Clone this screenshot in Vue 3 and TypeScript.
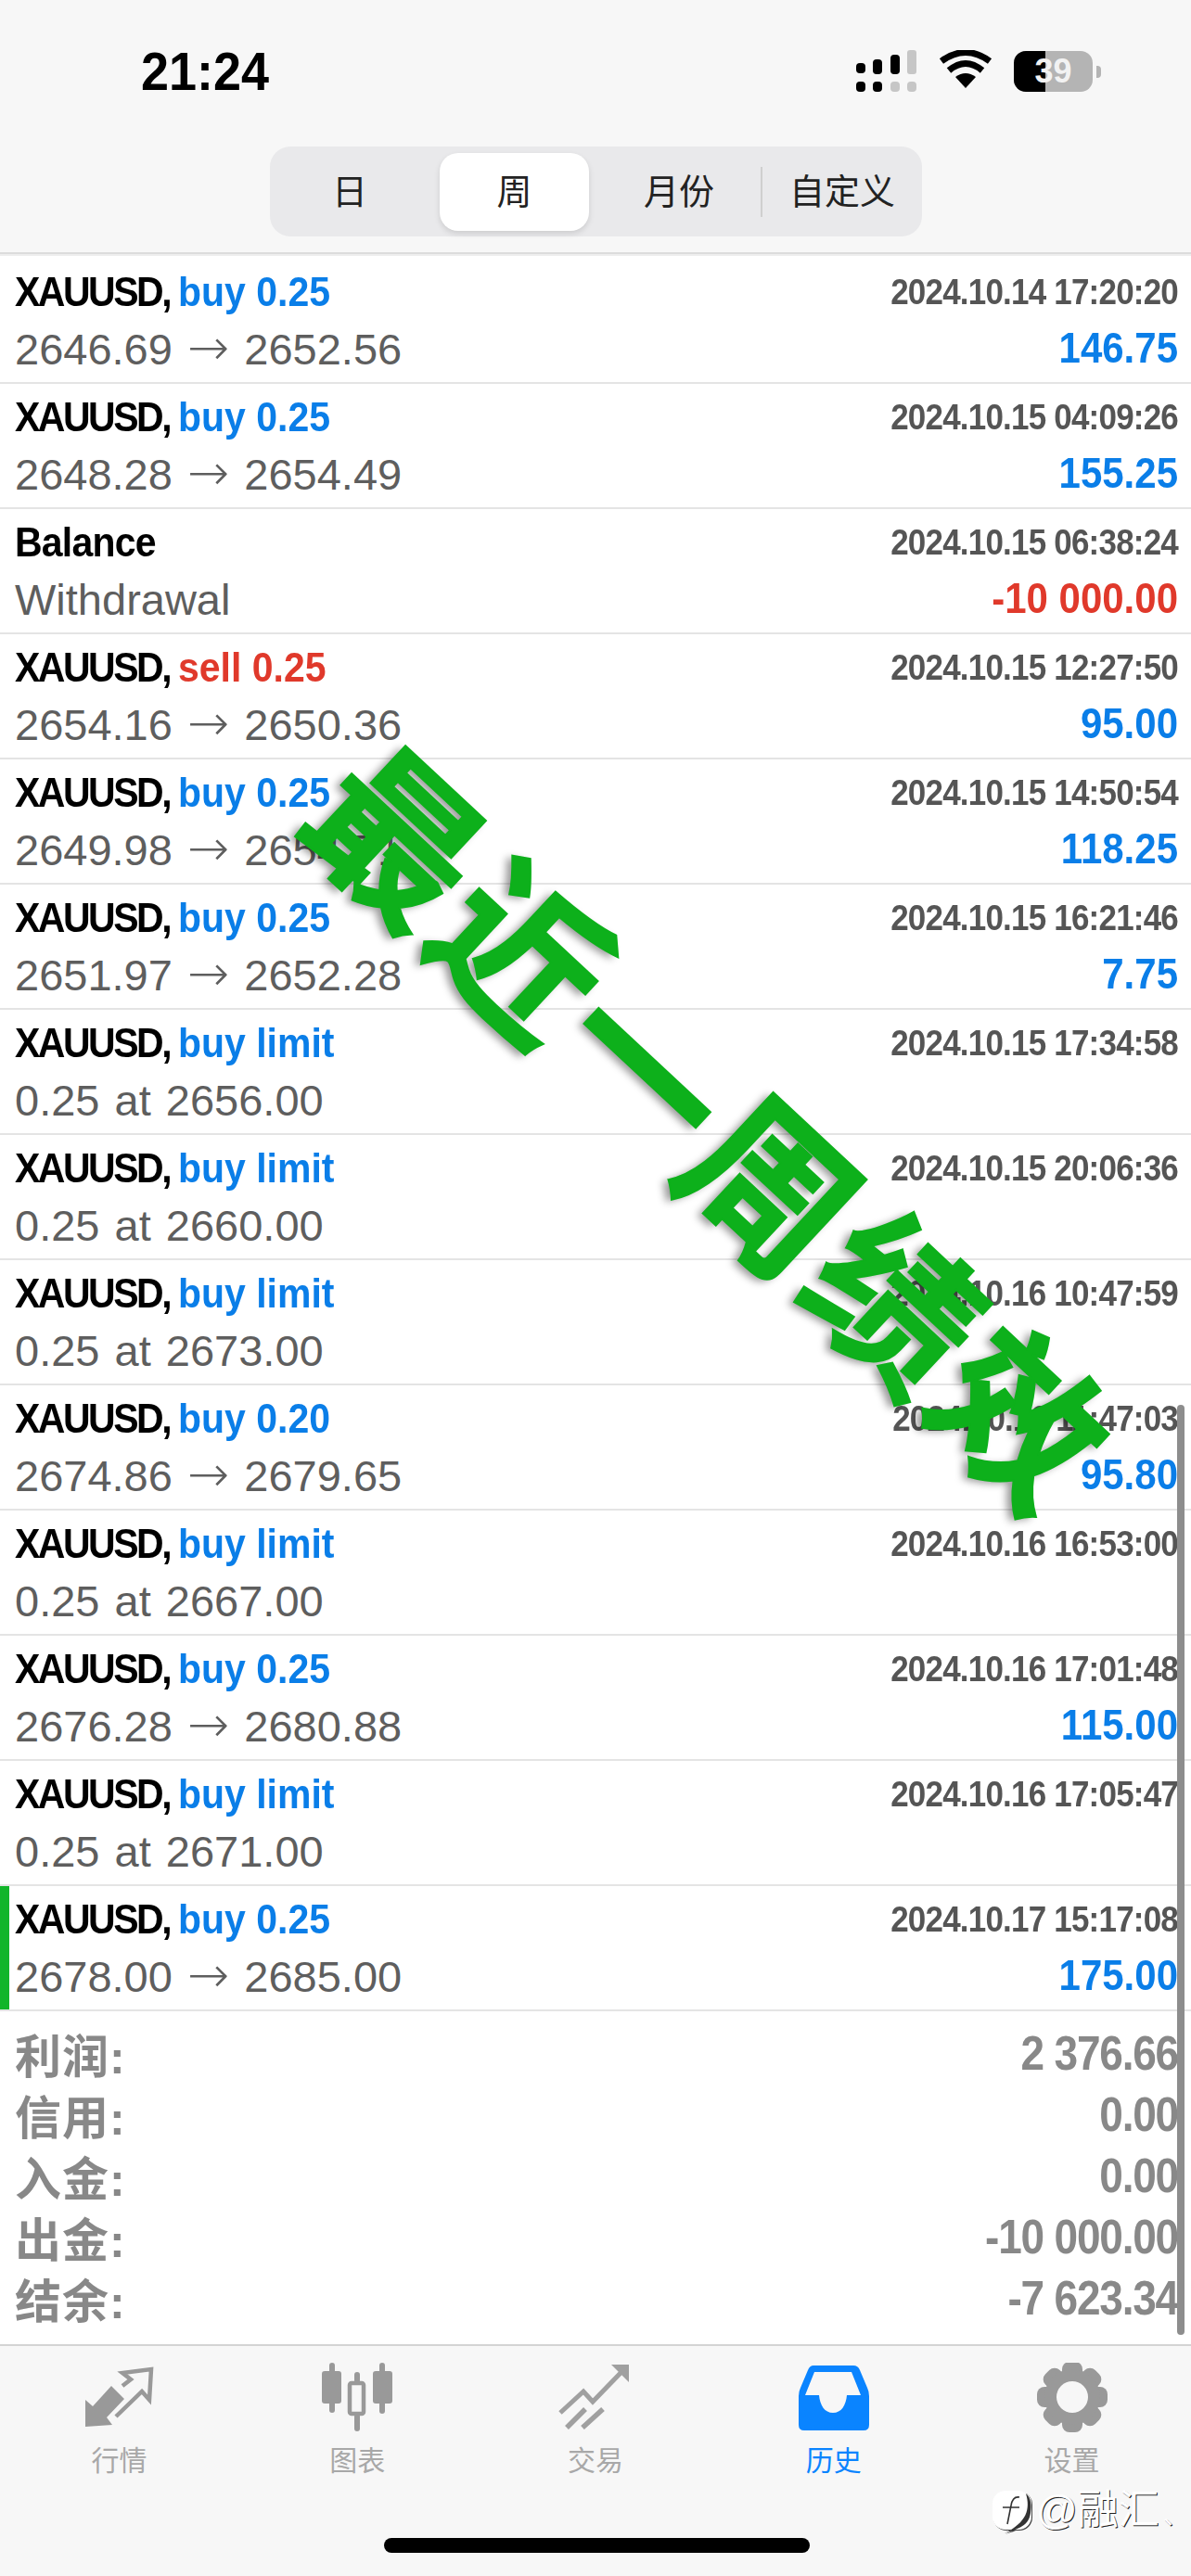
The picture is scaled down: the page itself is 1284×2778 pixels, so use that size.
<script setup lang="ts">
interface Row {
  title: string
  side: string
  sub: string
  time: string
  value?: string
  marked?: boolean
}

const rows: Row[] = [
  { title: 'XAUUSD,', side: 'buy 0.25', sub: '2646.69 → 2652.56', time: '2024.10.14 17:20:20', value: '146.75' },
  { title: 'XAUUSD,', side: 'buy 0.25', sub: '2648.28 → 2654.49', time: '2024.10.15 04:09:26', value: '155.25' },
  { title: 'Balance', side: '', sub: 'Withdrawal', time: '2024.10.15 06:38:24', value: '-10 000.00' },
  { title: 'XAUUSD,', side: 'sell 0.25', sub: '2654.16 → 2650.36', time: '2024.10.15 12:27:50', value: '95.00' },
  { title: 'XAUUSD,', side: 'buy 0.25', sub: '2649.98 → 2654.71', time: '2024.10.15 14:50:54', value: '118.25' },
  { title: 'XAUUSD,', side: 'buy 0.25', sub: '2651.97 → 2652.28', time: '2024.10.15 16:21:46', value: '7.75' },
  { title: 'XAUUSD,', side: 'buy limit', sub: '0.25 at 2656.00', time: '2024.10.15 17:34:58' },
  { title: 'XAUUSD,', side: 'buy limit', sub: '0.25 at 2660.00', time: '2024.10.15 20:06:36' },
  { title: 'XAUUSD,', side: 'buy limit', sub: '0.25 at 2673.00', time: '2024.10.16 10:47:59' },
  { title: 'XAUUSD,', side: 'buy 0.20', sub: '2674.86 → 2679.65', time: '2024.10.16 11:47:03', value: '95.80' },
  { title: 'XAUUSD,', side: 'buy limit', sub: '0.25 at 2667.00', time: '2024.10.16 16:53:00' },
  { title: 'XAUUSD,', side: 'buy 0.25', sub: '2676.28 → 2680.88', time: '2024.10.16 17:01:48', value: '115.00' },
  { title: 'XAUUSD,', side: 'buy limit', sub: '0.25 at 2671.00', time: '2024.10.16 17:05:47' },
  { title: 'XAUUSD,', side: 'buy 0.25', sub: '2678.00 → 2685.00', time: '2024.10.17 15:17:08', value: '175.00', marked: true },
]

const totals = [
  ['利润:', '2 376.66'],
  ['信用:', '0.00'],
  ['入金:', '0.00'],
  ['出金:', '-10 000.00'],
  ['结余:', '-7 623.34'],
]

const tabs = ['行情', '图表', '交易', '历史', '设置']
const gearTeeth = [0, 45, 90, 135, 180, 225, 270, 315]

function sideClass(row: Row) {
  return row.side.startsWith('sell') ? 'red' : 'blue'
}
function valueClass(row: Row) {
  return row.title === 'Balance' ? 'red' : 'blue'
}
function subParts(row: Row) {
  return row.sub.split(' → ')
}
</script>

<template>
  <div class="screen">
    <header class="top">
      <div class="status">
        <span class="clock">21:24</span>
        <div class="status-icons">
          <svg class="signal" width="66" height="46" viewBox="0 0 66 46">
            <g fill="#000">
              <rect x="0" y="14" width="10" height="11" rx="4" /><rect x="0" y="34" width="10" height="11" rx="4" />
              <rect x="18" y="10" width="10" height="16" rx="4" /><rect x="18" y="34" width="10" height="11" rx="4" />
              <rect x="37" y="5" width="10" height="21" rx="4" />
            </g>
            <g fill="#c6c6c6">
              <rect x="37" y="34" width="10" height="11" rx="4" />
              <rect x="55" y="0" width="10" height="26" rx="3" /><rect x="55" y="34" width="10" height="11" rx="4" />
            </g>
          </svg>
          <svg class="wifi" width="58" height="42" viewBox="0 0 58 42">
            <path d="M29 41 L18 29 Q29 21 40 29 Z" fill="#000" />
            <path d="M11 22 Q29 7 47 22" fill="none" stroke="#000" stroke-width="7" />
            <path d="M3 12 Q29 -7 55 12" fill="none" stroke="#000" stroke-width="7" />
          </svg>
          <div class="battery"><span class="level"></span><span class="num">39</span></div>
          <span class="nub"></span>
        </div>
      </div>
      <div class="segments">
        <span class="seg seg-day">日</span>
        <span class="seg seg-week">周</span>
        <span class="seg seg-month">月份</span>
        <span class="seg-line"></span>
        <span class="seg seg-custom">自定义</span>
      </div>
    </header>

    <main class="list">
      <div v-for="row in rows" :key="row.time" class="row" :class="{ marked: row.marked }">
        <div class="line">
          <span class="title" :class="{ plain: !row.side }">{{ row.title }} <span class="side" :class="sideClass(row)">{{ row.side }}</span></span>
          <span class="time">{{ row.time }}</span>
        </div>
        <div class="line">
          <span class="sub">
            <template v-if="subParts(row).length === 2">{{ subParts(row)[0] }} <span class="arrow">→</span> {{ subParts(row)[1] }}</template>
            <template v-else>{{ row.sub }}</template>
          </span>
          <span v-if="row.value" class="value" :class="valueClass(row)">{{ row.value }}</span>
        </div>
      </div>
    </main>

    <section class="totals">
      <div v-for="item in totals" :key="item[0]" class="total">
        <span class="total-label">{{ item[0] }}</span><span class="total-num">{{ item[1] }}</span>
      </div>
    </section>

    <nav class="tabbar">
      <div v-for="(tab, i) in tabs" :key="tab" class="tab" :class="{ active: i === 3 }">
        <svg width="80" height="78" viewBox="0 0 80 78">
          <g v-if="i === 0">
            <path d="M4 40 L12 47 L32 25 L46 39 L27 59 L33 67 L4 69 Z" fill="#999" />
            <path d="M44 25 L53 18 L44 11 L75 7 L73 40 L65 31 L37 58" fill="none" stroke="#999" stroke-width="4.5" />
          </g>
          <g v-else-if="i === 1" fill="#999">
            <rect x="2" y="9" width="21" height="35" rx="3" /><rect x="10" y="0" width="6" height="54" rx="3" />
            <rect x="32" y="22" width="15" height="33" rx="2" fill="none" stroke="#999" stroke-width="4.5" /><rect x="37" y="10" width="6" height="12" rx="3" /><rect x="37" y="55" width="6" height="19" rx="3" />
            <rect x="57" y="9" width="21" height="35" rx="3" /><rect x="64" y="0" width="6" height="55" rx="3" />
          </g>
          <g v-else-if="i === 2">
            <path d="M2 54 L27 31 L37 42 L69 9" fill="none" stroke="#a0a0a0" stroke-width="5" />
            <path d="M57 2 H76 V21 Z" fill="#a0a0a0" />
            <path d="M9 70 L29 50 M26 70 L48 50" fill="none" stroke="#a0a0a0" stroke-width="5.5" />
          </g>
          <g v-else-if="i === 3">
            <path d="M18 3 H61 Q66 3 68 8 L76 27 Q78 31 78 36 V67 Q78 73 72 73 H8 Q2 73 2 67 V36 Q2 31 4 27 L12 8 Q14 3 18 3 Z" fill="#0a84ff" />
            <path d="M19 10 H59 L69 35 H54 C53 46 48 54 39 54 C30 54 25 46 24 35 H9 Z" fill="#f7f7f7" />
          </g>
          <g v-else fill="#999">
            <rect v-for="deg in gearTeeth" :key="deg" x="29" y="-1" width="22" height="18" rx="8" :transform="`rotate(${deg} 40 37)`" />
            <path fill-rule="evenodd" d="M40 7 A30 30 0 1 1 40 67 A30 30 0 1 1 40 7 Z M40 20 A17 17 0 1 0 40 54 A17 17 0 1 0 40 20 Z" />
          </g>
        </svg>
        <span class="tab-label">{{ tab }}</span>
      </div>
    </nav>

    <div class="home"></div>
    <div class="scrollbar"></div>
    <div class="stamp">最近一周绩效</div>
    <div class="mark">
      <svg width="46" height="48" viewBox="0 0 46 48">
        <rect x="1" y="0" width="42" height="42" rx="14" fill="#fff" />
        <path d="M14 46 C24 42 40 40 42 24 C43 16 43 8 37 3 C42 20 38 34 14 46 Z" fill="#333" />
        <path d="M12 18 H30 M30 7 C24 6 22 10 21 16 L17 36" fill="none" stroke="#333" stroke-width="1.6" />
      </svg>
      <span>@融汇<span class="comma">、</span></span>
    </div>
  </div>
</template>

<style scoped>
.screen {
  position: relative;
  width: 1284px;
  height: 2778px;
  overflow: hidden;
  background: #fff;
  display: flex;
  flex-direction: column;
  font-family: "Liberation Sans", "Noto Sans CJK SC", sans-serif;
}

.top {
  height: 272px;
  background: #f7f7f7;
  border-bottom: 2px solid #dcdcdc;
  flex: none;
}

.status {
  display: flex;
  justify-content: space-between;
  align-items: center;
  height: 50px;
  padding: 52px 97px 0 152px;
}

.clock {
  font-size: 54px;
  font-weight: 700;
  color: #000;
  transform: scaleY(1.06);
}

.status-icons {
  display: flex;
  align-items: center;
  gap: 23px;
}

.wifi { margin-top: -4px; }

.battery {
  position: relative;
  width: 85px;
  height: 44px;
  border-radius: 13px;
  background: #b4b4b4;
  overflow: hidden;
}

.level {
  position: absolute;
  inset: 0 auto 0 0;
  width: 34px;
  background: #000;
}

.num {
  position: absolute;
  inset: 0;
  text-align: center;
  font-size: 36px;
  line-height: 44px;
  font-weight: 700;
  color: #f2f2f2;
}

.nub {
  width: 5px;
  height: 13px;
  margin-left: -19px;
  border-radius: 0 4px 4px 0;
  background: #b4b4b4;
}

.segments {
  margin: 56px 0 0 291px;
  width: 703px;
  height: 97px;
  border-radius: 22px;
  background: #e9e9eb;
  display: flex;
  align-items: center;
  font-size: 38px;
  color: #222;
}

.seg {
  text-align: center;
  line-height: 84px;
}

.seg-day { width: 172px; margin-right: 11px; }
.seg-week {
  width: 161px;
  border-radius: 20px;
  background: #fff;
  box-shadow: 0 3px 6px rgba(0, 0, 0, 0.12);
}
.seg-month { width: 170px; margin-left: 12px; margin-right: 3px; }
.seg-line {
  width: 2px;
  height: 54px;
  background: #cfcfcf;
}
.seg-custom { width: 172px; }

.list {
  padding-top: 3px;
  border-top: 2px solid #eee;
  flex: none;
}

.row {
  box-sizing: border-box;
  height: 135px;
  padding: 6px 14px 0 16px;
  border-bottom: 2px solid #e4e4e4;
  position: relative;
}

.row.marked::before {
  content: "";
  position: absolute;
  left: 0;
  top: 0;
  bottom: 0;
  width: 10px;
  background: #12b52a;
}

.line {
  display: flex;
  justify-content: space-between;
  align-items: center;
  height: 60px;
  margin-bottom: 1px;
}

.title {
  font-size: 41px;
  font-weight: 700;
  letter-spacing: -2.5px;
  color: #000;
  transform: scaleY(1.1);
}

.title.plain { letter-spacing: -0.8px; }

.side { letter-spacing: 0; }

.time {
  font-size: 35px;
  font-weight: 700;
  letter-spacing: -0.8px;
  color: #555;
  transform: scaleY(1.1);
}

.sub {
  font-size: 47px;
  word-spacing: 3px;
  color: #5e5e5e;
}

.arrow {
  font-family: "DejaVu Sans", sans-serif;
  font-size: 54px;
  font-weight: 300;
  line-height: 1;
}

.value {
  font-size: 42px;
  font-weight: 700;
  transform: scaleY(1.1);
}

.blue { color: #0a7ee8; }
.red { color: #e0392b; }

.totals {
  flex: none;
  padding: 12px 14px 0 16px;
  height: 361px;
  box-sizing: border-box;
  border-bottom: 2px solid #d4d4d4;
}

.total {
  display: flex;
  justify-content: space-between;
  align-items: center;
  height: 66px;
  font-weight: 700;
  color: #888;
}

.total-label {
  font-size: 50px;
  letter-spacing: 1px;
}

.total-num {
  font-size: 46px;
  letter-spacing: -1.2px;
  transform: scaleY(1.12);
}

.tabbar {
  flex: 1;
  background: #f7f7f7;
  display: flex;
  padding-top: 18px;
}

.tab {
  flex: 1;
  display: flex;
  flex-direction: column;
  align-items: center;
  gap: 8px;
}

.tab-label {
  font-size: 30px;
  line-height: 40px;
  color: #a8a8a8;
}

.active .tab-label { color: #0a84ff; }

.home {
  position: absolute;
  left: 414px;
  top: 2737px;
  width: 459px;
  height: 16px;
  border-radius: 8px;
  background: #000;
}

.scrollbar {
  position: absolute;
  left: 1269px;
  top: 1515px;
  width: 8px;
  height: 1003px;
  border-radius: 4px;
  background: #8d8d8d;
}

.stamp {
  position: absolute;
  left: 210px;
  top: 1132px;
  width: 1100px;
  font-size: 178px;
  line-height: 178px;
  letter-spacing: 6px;
  text-align: center;
  white-space: nowrap;
  font-weight: 700;
  color: #0db01b;
  -webkit-text-stroke: 2px #0db01b;
  text-shadow: -3px 6px 8px rgba(0, 0, 0, 0.4);
  transform: rotate(43deg);
}

.mark {
  position: absolute;
  left: 1069px;
  top: 2684px;
  display: flex;
  align-items: center;
  gap: 2px;
  color: #fff;
  font-size: 44px;
  line-height: 46px;
  white-space: nowrap;
  text-shadow: 1px 1px 0 #222;
}

.comma {
  font-size: 28px;
  margin-left: 4px;
}

.mark svg { filter: drop-shadow(1px 1px 0 #444); }
</style>

<style>
html, body { margin: 0; }
</style>
